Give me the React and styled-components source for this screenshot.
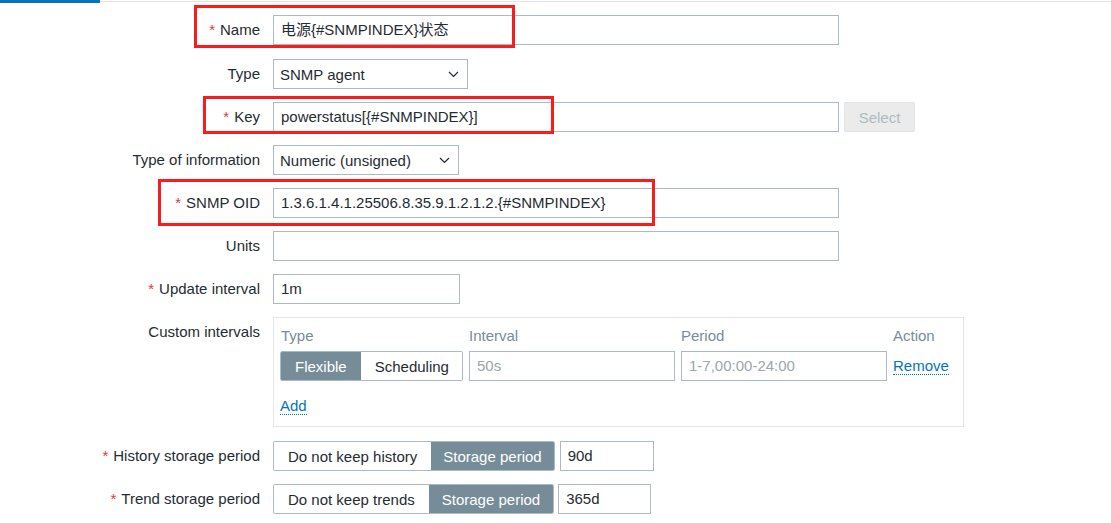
import React from "react";
import styled, { createGlobalStyle } from "styled-components";

const GlobalStyle = createGlobalStyle`
  body {
    margin: 0;
    background: #ffffff;
    font-family: "Liberation Sans", Arial, "Noto Sans CJK SC", sans-serif;
    font-size: 15px;
    color: #1f2c33;
  }
`;

const Page = styled.div`
  position: relative;
  width: 1111px;
  height: 523px;
  overflow: hidden;
`;

const TabStrip = styled.div`
  display: flex;
  align-items: flex-start;
  height: 3px;
`;

const ActiveTab = styled.div`
  width: 100px;
  height: 3px;
  background: #0275b8;
`;

const TabLine = styled.div`
  flex: 1;
  height: 1px;
  margin-top: 1px;
  background: #e4e4e4;
`;

const Form = styled.div`
  display: grid;
  grid-template-columns: 260px 1fr;
  column-gap: 13px;
  row-gap: 13px;
  padding-top: 12px;
`;

const Label = styled.div`
  display: flex;
  justify-content: flex-end;
  align-items: ${(p) => (p.$top ? "flex-start" : "center")};
  height: 30px;
  line-height: 30px;
  white-space: nowrap;
  margin-top: ${(p) => p.$shift || 0}px;
`;

const Star = styled.span`
  color: #e33734;
  margin-right: 5px;
`;

const Field = styled.div`
  display: flex;
  align-items: center;
  gap: ${(p) => p.$gap || 5}px;
  margin-top: ${(p) => p.$shift || 0}px;
`;

const Input = styled.div`
  box-sizing: border-box;
  width: ${(p) => p.$w}px;
  height: 30px;
  border: 1px solid #acbbc2;
  padding: 0 7px;
  line-height: 28px;
  color: ${(p) => (p.$muted ? "#9aa6ac" : "#1f2c33")};
  background: #ffffff;
  white-space: nowrap;
`;

const Select = styled.div`
  box-sizing: border-box;
  width: ${(p) => p.$w}px;
  height: 30px;
  border: 1px solid #acbbc2;
  padding: 0 8px 0 6px;
  display: flex;
  align-items: center;
  justify-content: space-between;
  background: #ffffff;
`;

const Chevron = () => (
  <svg width="11" height="7" viewBox="0 0 11 7">
    <path d="M1 1l4.5 4.5L10 1" fill="none" stroke="#1f2c33" strokeWidth="1.2" />
  </svg>
);

const DisabledButton = styled.div`
  box-sizing: border-box;
  width: 71px;
  height: 30px;
  border: 1px solid #dfe4e7;
  border-radius: 2px;
  background: #ebebeb;
  color: #acbbc2;
  display: flex;
  align-items: center;
  justify-content: center;
`;

const Segmented = styled.div`
  display: flex;
  box-sizing: border-box;
  height: 30px;
  border: 1px solid #acbbc2;
  border-radius: 2px;
  overflow: hidden;
`;

const Segment = styled.div`
  display: flex;
  align-items: center;
  padding: 0 ${(p) => p.$pad || 14}px;
  background: ${(p) => (p.$active ? "#768d99" : "#ffffff")};
  color: ${(p) => (p.$active ? "#ffffff" : "#1f2c33")};
  white-space: nowrap;
`;

const IntervalBox = styled.div`
  box-sizing: border-box;
  width: 691px;
  height: 110px;
  border: 1px solid #e6e6e6;
  padding: 5px 6px 0 6px;
  display: grid;
  grid-template-columns: 183px 206px 206px auto;
  grid-template-rows: 24px 30px 42px;
  column-gap: 6px;
  row-gap: 4px;
  align-items: center;
`;

const Header = styled.div`
  color: #768d99;
  padding-left: ${(p) => p.$pad || 0}px;
`;

const Link = styled.span`
  color: #0275b8;
  border-bottom: 1px dotted #0275b8;
  line-height: 17px;
  justify-self: start;
`;

const Annotation = styled.div`
  position: absolute;
  box-sizing: border-box;
  border: 3px solid #f81c1c;
  pointer-events: none;
`;

export default function App() {
  return (
    <Page>
      <GlobalStyle />
      <TabStrip>
        <ActiveTab />
        <TabLine />
      </TabStrip>
      <Form>
        <Label>
          <Star>*</Star>Name
        </Label>
        <Field>
          <Input $w={566}>电源{"{#SNMPINDEX}"}状态</Input>
        </Field>

        <Label $shift={1}>Type</Label>
        <Field $shift={1}>
          <Select $w={195}>
            <span>SNMP agent</span>
            <Chevron />
          </Select>
        </Field>

        <Label>
          <Star>*</Star>Key
        </Label>
        <Field>
          <Input $w={566}>powerstatus[{"{#SNMPINDEX}"}]</Input>
          <DisabledButton>Select</DisabledButton>
        </Field>

        <Label>Type of information</Label>
        <Field>
          <Select $w={186}>
            <span>Numeric (unsigned)</span>
            <Chevron />
          </Select>
        </Field>

        <Label>
          <Star>*</Star>SNMP OID
        </Label>
        <Field>
          <Input $w={566}>1.3.6.1.4.1.25506.8.35.9.1.2.1.2.{"{#SNMPINDEX}"}</Input>
        </Field>

        <Label>Units</Label>
        <Field>
          <Input $w={566} />
        </Field>

        <Label>
          <Star>*</Star>Update interval
        </Label>
        <Field>
          <Input $w={187}>1m</Input>
        </Field>

        <Label $top>Custom intervals</Label>
        <Field>
          <IntervalBox>
            <Header $pad={1}>Type</Header>
            <Header>Interval</Header>
            <Header>Period</Header>
            <Header>Action</Header>
            <Segmented>
              <Segment $active $pad={14}>
                Flexible
              </Segment>
              <Segment $pad={14}>Scheduling</Segment>
            </Segmented>
            <Input $w={206} $muted>
              50s
            </Input>
            <Input $w={206} $muted>
              1-7,00:00-24:00
            </Input>
            <Link>Remove</Link>
            <Link>Add</Link>
          </IntervalBox>
        </Field>

        <Label $shift={1}>
          <Star>*</Star>History storage period
        </Label>
        <Field $gap={5} $shift={1}>
          <Segmented>
            <Segment $pad={14}>Do not keep history</Segment>
            <Segment $active $pad={12}>
              Storage period
            </Segment>
          </Segmented>
          <Input $w={94}>90d</Input>
        </Field>

        <Label>
          <Star>*</Star>Trend storage period
        </Label>
        <Field $gap={4}>
          <Segmented>
            <Segment $pad={14}>Do not keep trends</Segment>
            <Segment $active $pad={13}>
              Storage period
            </Segment>
          </Segmented>
          <Input $w={93}>365d</Input>
        </Field>
      </Form>

      <Annotation style={{ left: 194, top: 5, width: 321, height: 43 }} />
      <Annotation style={{ left: 203, top: 96, width: 351, height: 38 }} />
      <Annotation style={{ left: 158, top: 179, width: 497, height: 47 }} />
    </Page>
  );
}
